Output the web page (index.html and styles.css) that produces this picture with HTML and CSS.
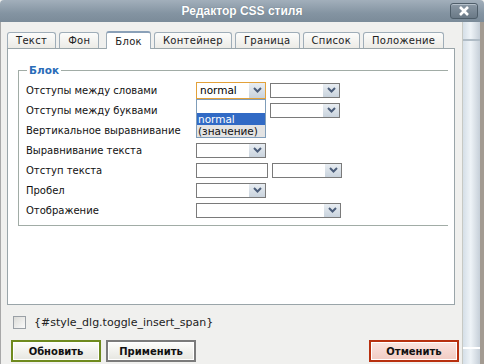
FILE: index.html
```html
<!DOCTYPE html>
<html lang="ru">
<head>
    <meta charset="UTF-8">
    <title>Редактор CSS стиля</title>
    <link rel="stylesheet" href="styles.css">
</head>
<body>
    <div class="dialog">
        <div class="titlebar">
            <span class="title">Редактор CSS стиля</span>
            <span class="close">
                <svg width="12" height="10" viewBox="0 0 12 10"><path d="M2 1 L10 9 M10 1 L2 9" stroke="#fff" stroke-width="2.6"/></svg>
            </span>
        </div>
        <div class="frame">
            <div class="main">
                <ul class="tabs">
                    <li class="tab">Текст</li>
                    <li class="tab">Фон</li>
                    <li class="tab active">Блок</li>
                    <li class="tab">Контейнер</li>
                    <li class="tab">Граница</li>
                    <li class="tab">Список</li>
                    <li class="tab">Положение</li>
                </ul>

                <div class="panel">
                    <fieldset class="group">
                        <legend>Блок</legend>

                        <div class="row">
                            <span class="label">Отступы между словами</span>
                            <div class="combo">
                                <div class="select focused"><span class="value">normal</span><span class="arrow"><svg width="9" height="6" viewBox="0 0 9 6"><path d="M1 1 L4.5 4.5 L8 1" fill="none" stroke="#4b5d7a" stroke-width="2"/></svg></span></div>
                                <ul class="dropdown">
                                    <li>&nbsp;</li>
                                    <li class="selected">normal</li>
                                    <li class="hover">(значение)</li>
                                </ul>
                            </div>
                            <div class="select"><span class="value"></span><span class="arrow"><svg width="9" height="6" viewBox="0 0 9 6"><path d="M1 1 L4.5 4.5 L8 1" fill="none" stroke="#4b5d7a" stroke-width="2"/></svg></span></div>
                        </div>

                        <div class="row">
                            <span class="label">Отступы между буквами</span>
                            <div class="select"><span class="value"></span><span class="arrow"><svg width="9" height="6" viewBox="0 0 9 6"><path d="M1 1 L4.5 4.5 L8 1" fill="none" stroke="#4b5d7a" stroke-width="2"/></svg></span></div>
                            <div class="select"><span class="value"></span><span class="arrow"><svg width="9" height="6" viewBox="0 0 9 6"><path d="M1 1 L4.5 4.5 L8 1" fill="none" stroke="#4b5d7a" stroke-width="2"/></svg></span></div>
                        </div>

                        <div class="row">
                            <span class="label">Вертикальное выравнивание</span>
                            <div class="select"><span class="value"></span><span class="arrow"><svg width="9" height="6" viewBox="0 0 9 6"><path d="M1 1 L4.5 4.5 L8 1" fill="none" stroke="#4b5d7a" stroke-width="2"/></svg></span></div>
                        </div>

                        <div class="row">
                            <span class="label">Выравнивание текста</span>
                            <div class="select"><span class="value"></span><span class="arrow"><svg width="9" height="6" viewBox="0 0 9 6"><path d="M1 1 L4.5 4.5 L8 1" fill="none" stroke="#4b5d7a" stroke-width="2"/></svg></span></div>
                        </div>

                        <div class="row">
                            <span class="label">Отступ текста</span>
                            <input class="text-input" type="text">
                            <div class="select"><span class="value"></span><span class="arrow"><svg width="9" height="6" viewBox="0 0 9 6"><path d="M1 1 L4.5 4.5 L8 1" fill="none" stroke="#4b5d7a" stroke-width="2"/></svg></span></div>
                        </div>

                        <div class="row">
                            <span class="label">Пробел</span>
                            <div class="select"><span class="value"></span><span class="arrow"><svg width="9" height="6" viewBox="0 0 9 6"><path d="M1 1 L4.5 4.5 L8 1" fill="none" stroke="#4b5d7a" stroke-width="2"/></svg></span></div>
                        </div>

                        <div class="row">
                            <span class="label">Отображение</span>
                            <div class="select wide"><span class="value"></span><span class="arrow"><svg width="9" height="6" viewBox="0 0 9 6"><path d="M1 1 L4.5 4.5 L8 1" fill="none" stroke="#4b5d7a" stroke-width="2"/></svg></span></div>
                        </div>
                    </fieldset>
                </div>

                <label class="toggle">
                    <span class="checkbox"></span>
                    <span>{#style_dlg.toggle_insert_span}</span>
                </label>

                <div class="buttons">
                    <button class="btn btn-update">Обновить</button>
                    <button class="btn">Применить</button>
                    <span class="spacer"></span>
                    <button class="btn btn-cancel">Отменить</button>
                </div>
            </div>

            <div class="scroll">
                <div class="scroll-top"></div>
                <div class="scroll-track"></div>
                <div class="scroll-bottom"></div>
            </div>
        </div>
    </div>
</body>
</html>
```

FILE: styles.css
```css
body {
    margin: 0;
    padding: 0;
    font-family: "DejaVu Sans", Verdana, sans-serif;
    font-size: 10px;
    color: #000;
    background: #f0f0ee;
}

.dialog {
    width: 484px;
    height: 364px;
    display: flex;
    flex-direction: column;
    overflow: hidden;
}

/* Title bar */
.titlebar {
    height: 22px;
    flex: none;
    display: flex;
    align-items: center;
    justify-content: center;
    position: relative;
    background: linear-gradient(#a2afbb, #8494a2 60%, #7b8b99);
    border-radius: 4px 4px 0 0;
}

.title {
    font-family: "Liberation Sans", Arial, sans-serif;
    font-weight: bold;
    font-size: 12px;
    color: #fff;
    text-shadow: 0 0 1px #5a6a78;
}

.close {
    position: absolute;
    right: 6px;
    top: 3px;
    width: 28px;
    height: 16px;
    box-sizing: border-box;
    border: 1px solid #4e5d69;
    border-radius: 3px;
    background: linear-gradient(#8a98a5, #6a7986);
    box-shadow: inset 0 1px 0 #b5c0ca;
    display: flex;
    align-items: center;
    justify-content: center;
}

/* Body frame */
.frame {
    flex: 1;
    display: flex;
    border-left: 1px solid #a8a8a8;
}

.main {
    flex: 1;
    padding: 9px 0 0 6px;
}

/* Tabs */
.tabs {
    list-style: none;
    margin: 0;
    padding: 0;
    display: flex;
    align-items: flex-end;
    gap: 3px;
    height: 17px;
}

.tab {
    height: 15px;
    padding: 0 8px;
    line-height: 16px;
    border: 1px solid #9fadb8;
    border-bottom: none;
    border-radius: 3px 3px 0 0;
    background: linear-gradient(#fcfcfb, #ecebe6);
    color: #222;
    font-size: 10px;
    letter-spacing: 0.3px;
}

.tab.active {
    line-height: 18px;
    background: #fff;
    border-top: 2px solid #8aa0b8;
    height: 16px;
    position: relative;
    top: 1px;
    margin-left: 4px;
}

/* Panel */
.panel {
    width: 426px;
    height: 240px;
    border: 1px solid #9aa5a9;
    background: #fff;
    padding: 15px 10px 0;
}

.group {
    margin: 0 -4px 0 0;
    padding: 4px 0 5px 7px;
    border: 1px solid #a1aca6;
    border-right: none;
}

.group legend {
    padding: 0 2px;
    margin-left: 1px;
    font-weight: bold;
    font-size: 10.5px;
    color: #2a6db8;
}

.row {
    height: 20px;
    display: flex;
    align-items: center;
    gap: 4px;
}

.label {
    width: 166px;
    flex: none;
    color: #111;
    white-space: nowrap;
}

/* Fake select boxes */
.combo {
    position: relative;
}

.select {
    width: 70px;
    height: 15px;
    box-sizing: border-box;
    border: 1px solid #7a7a7a;
    background: #fff;
    display: flex;
}

.select.wide {
    width: 145px;
}

.select.focused {
    height: 17px;
    border-color: #e2a13a;
}

.value {
    flex: 1;
    padding-left: 3px;
    line-height: 15px;
    font-size: 10.5px;
}

.arrow {
    width: 16px;
    flex: none;
    background: linear-gradient(#e8edf2, #c9d3dd);
    border-left: 1px solid #fff;
    display: flex;
    align-items: center;
    justify-content: center;
}

.dropdown {
    position: absolute;
    left: 0;
    top: 17px;
    width: 70px;
    box-sizing: border-box;
    list-style: none;
    margin: 0;
    padding: 0;
    border: 1px solid #7f9db9;
    background: #fff;
    z-index: 2;
    font-size: 10.5px;
}

.dropdown li {
    height: 12px;
    line-height: 12px;
    padding-left: 1px;
}

.dropdown li:first-child {
    height: 13px;
}

.dropdown .selected {
    background: #316ac5;
    color: #fff;
}

.dropdown .hover {
    background: #e3e3e3;
    color: #111;
}

.text-input {
    width: 72px;
    height: 15px;
    box-sizing: border-box;
    border: 1px solid #7a7a7a;
    margin: 0;
    padding: 0;
}

/* Bottom */
.toggle {
    display: flex;
    align-items: center;
    gap: 8px;
    margin: 11px 0 0 6px;
    height: 12px;
    color: #222;
    font-size: 11px;
}

.checkbox {
    width: 11px;
    height: 11px;
    border: 1px solid #9aa0a6;
    background: linear-gradient(135deg, #dcdcd8, #fafafa);
}

.buttons {
    display: flex;
    gap: 5px;
    margin: 12px 0 0 4px;
    width: 448px;
}

.spacer {
    flex: 1;
}

.btn {
    width: 90px;
    height: 22px;
    margin: 0;
    font-family: "DejaVu Sans", Verdana, sans-serif;
    font-weight: bold;
    font-size: 10px;
    color: #111;
    border: 2px solid #7b7b7b;
    background: linear-gradient(#fdfdfb, #e6e6e0);
    box-shadow: inset 0 0 0 1px #fff;
    padding: 0;
}

.btn-update {
    border-color: #6f8a1e;
}

.btn-cancel {
    border-color: #b8300f;
    background: linear-gradient(#fbe5e0, #f2cbc3);
}

/* Right scroll strip */
.scroll {
    width: 17px;
    flex: none;
    display: flex;
    flex-direction: column;
    border-left: 1px solid #c7c9c4;
    border-right: 4px solid #a39b92;
}

.scroll-top,
.scroll-track,
.scroll-bottom {
    background: linear-gradient(90deg, #d5dfe8, #eef3f7 45%, #c6cfd8);
}

.scroll-top {
    height: 17px;
    border-bottom: 2px solid #b0bcc6;
}

.scroll-track {
    flex: 1;
}

.scroll-bottom {
    height: 15px;
    border-top: 2px solid #fff;
}
```
